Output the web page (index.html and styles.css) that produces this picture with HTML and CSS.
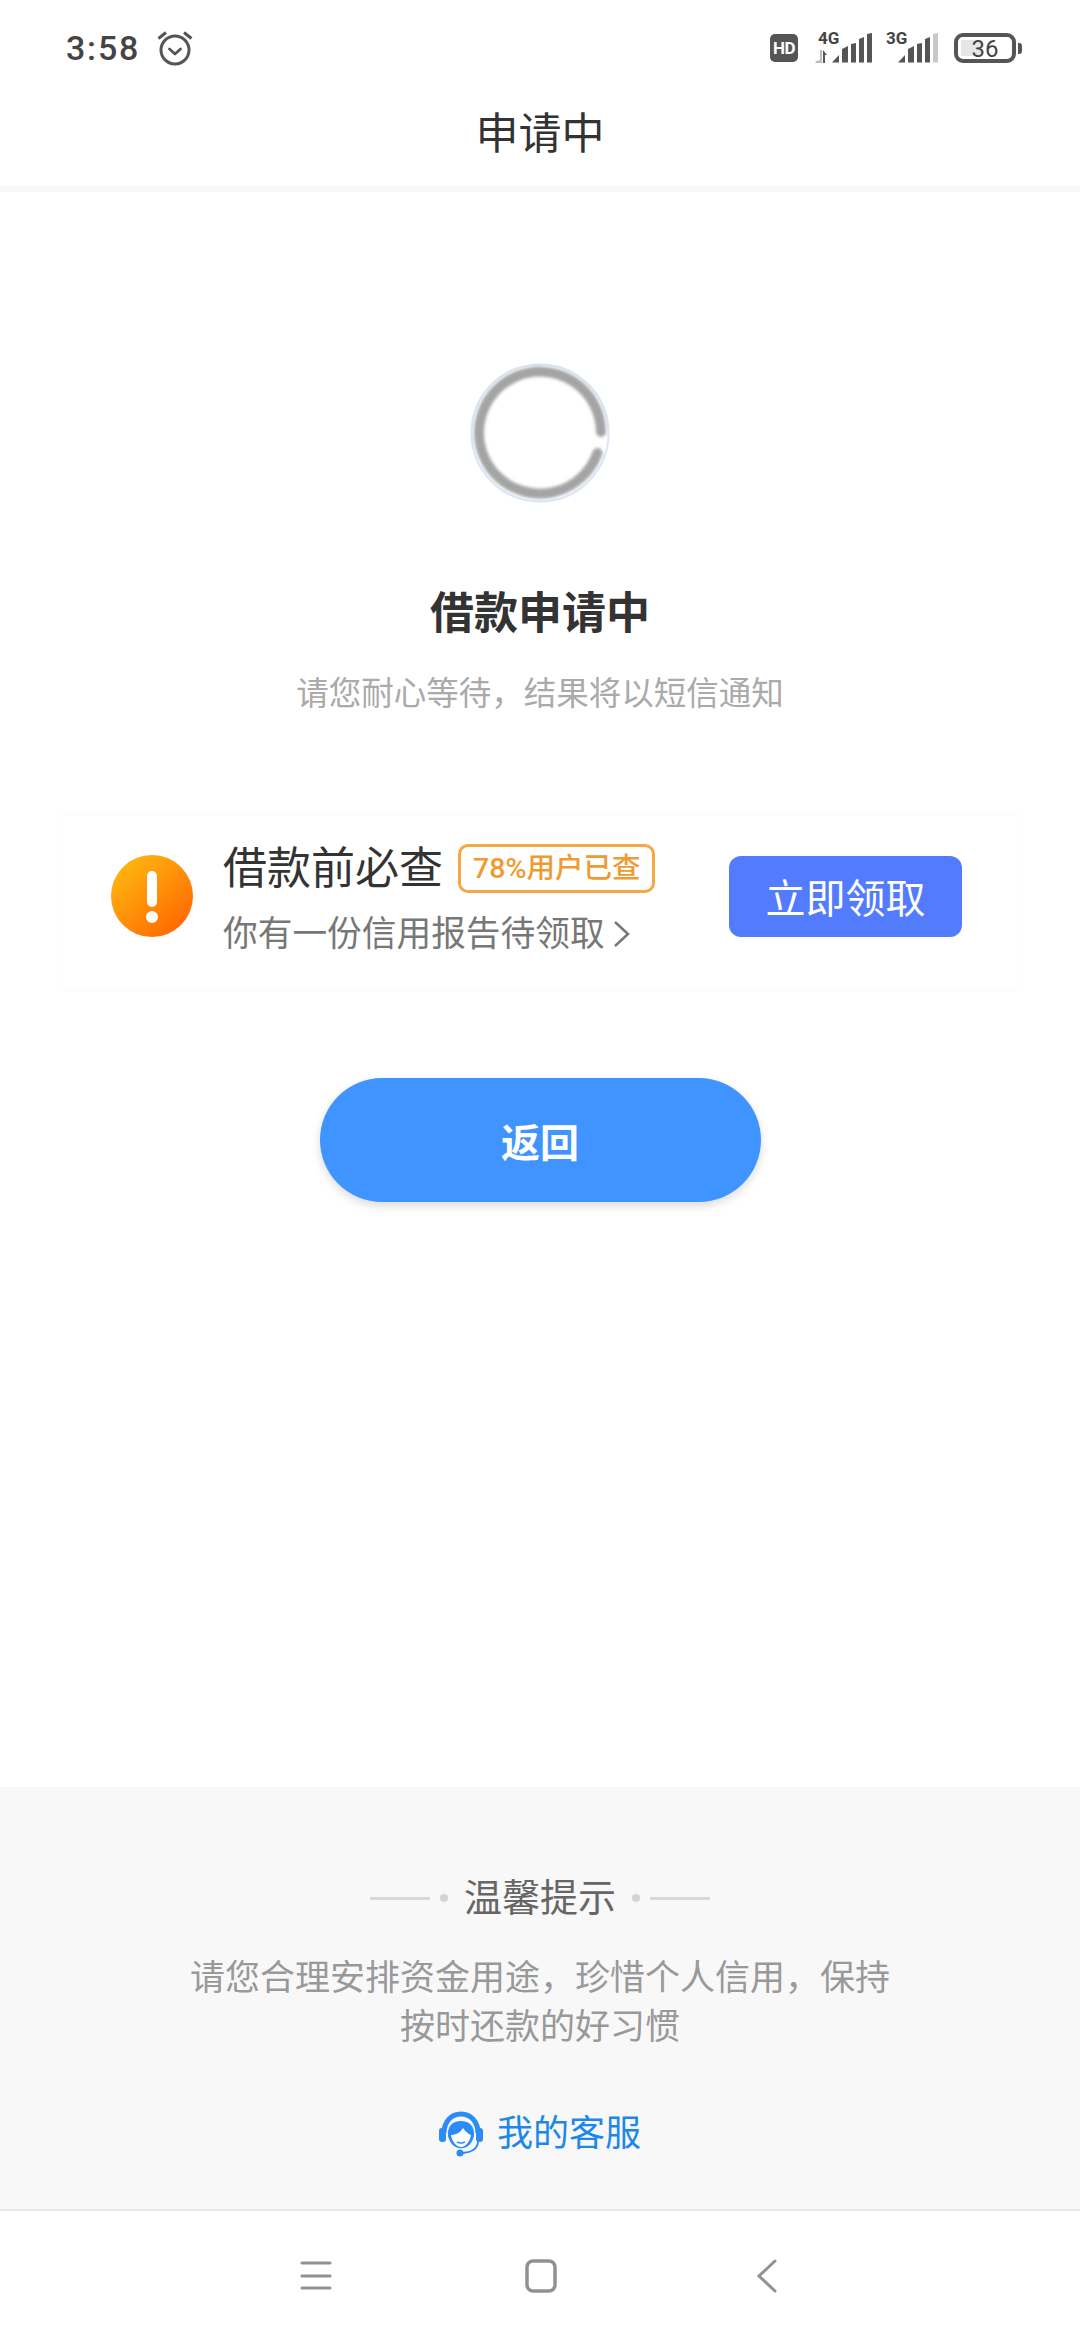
FILE: index.html
```html
<!DOCTYPE html>
<html lang="zh-CN">

<head>
    <meta charset="UTF-8">
    <meta name="viewport" content="width=device-width, initial-scale=1.0">
    <title>申请中</title>
    <link rel="stylesheet" href="styles.css">
</head>

<body>
    <div class="page">
        <header class="topbar">
            <div class="status">
                <div class="status-left">
                    <span class="time">3:58</span>
                    <svg class="alarm" width="36" height="36" viewBox="0 0 36 36" fill="none" stroke="#555" stroke-width="3">
                        <circle cx="18" cy="20" r="14" />
                        <path d="M12.5 19l5.5 5 5.5-5" stroke-width="2.8" stroke-linecap="round" stroke-linejoin="round" />
                        <path d="M1.5 8.500L9 2.500M34.500 8.500L27 2.500" />
                    </svg>
                </div>
                <div class="status-right">
                    <span class="hd">HD</span>
                    <div class="signal signal-4g">
                        <span class="net">4G</span>
                        <svg class="arrows" width="13" height="13" viewBox="0 0 13 13">
                            <path d="M5 0h2v13L0 13l2-2.500h3z" fill="#bbb" />
                            <path d="M8 13V0l4 5h-2v8z" fill="#555" />
                        </svg>
                        <svg class="bars" width="40" height="30" viewBox="0 0 40 30" fill="#555">
                            <path d="M0 29.500L7 22v7.500zM10 16l6-3v16.500h-6zM19 11l5-1v19.500h-5zM27 6l5-2v25.500h-5zM35 1l5-1v29.500h-5z" />
                        </svg>
                    </div>
                    <div class="signal signal-3g">
                        <span class="net">3G</span>
                        <svg class="bars" width="40" height="30" viewBox="0 0 40 30" fill="#555">
                            <path d="M0 29.500L7 22v7.500zM10 16l6-3v16.500h-6zM19 11l5-1v19.500h-5zM27 6l5-2v25.500h-5z" />
                            <path d="M35 1l5-1v29.500h-5z" fill="#c8c8c8" />
                        </svg>
                    </div>
                    <div class="battery">
                        <div class="battery-body">
                            <span class="battery-fill"></span>
                            <span class="battery-num">36</span>
                        </div>
                        <span class="battery-nub"></span>
                    </div>
                </div>
            </div>
            <h1 class="nav-title">申请中</h1>
        </header>

        <main class="content">
            <svg class="spinner" width="140" height="140" viewBox="0 0 140 140" fill="none">
                <defs>
                    <filter id="soft" x="-10%" y="-10%" width="120%" height="120%">
                        <feGaussianBlur stdDeviation="1.6" />
                    </filter>
                </defs>
                <circle cx="70" cy="70" r="68.500" stroke="#d9e7f9" stroke-width="2" />
                <path d="M127.500 90A61 61 0 1 1 131 69" stroke="#a4a4a4" stroke-width="10" stroke-linecap="round" filter="url(#soft)" />
            </svg>
            <h2 class="state-title">借款申请中</h2>
            <p class="state-sub">请您耐心等待，结果将以短信通知</p>

            <section class="promo">
                <svg class="promo-icon" width="82" height="82" viewBox="0 0 82 82">
                    <defs>
                        <linearGradient id="warn" x1="0.150" y1="0.100" x2="0.850" y2="0.900">
                            <stop offset="0" stop-color="#ffb510" />
                            <stop offset="1" stop-color="#ff6a00" />
                        </linearGradient>
                    </defs>
                    <circle cx="41" cy="41" r="41" fill="url(#warn)" />
                    <rect x="36" y="16" width="10" height="36" rx="5" fill="#fff" />
                    <circle cx="41" cy="62" r="6" fill="#fff" />
                </svg>
                <div class="promo-text">
                    <div class="promo-head">
                        <span class="promo-title">借款前必查</span>
                        <span class="promo-tag">78%用户已查</span>
                    </div>
                    <div class="promo-sub">
                        你有一份信用报告待领取
                        <svg width="18" height="28" viewBox="0 0 18 28" fill="none" stroke="#777" stroke-width="2.500">
                            <path d="M2 2l13 12L2 26" />
                        </svg>
                    </div>
                </div>
                <button class="promo-btn">立即领取</button>
            </section>

            <button class="back-btn">返回</button>
        </main>

        <footer class="tips">
            <div class="tips-head">
                <span class="tips-line"></span>
                <span class="tips-dot"></span>
                <span class="tips-title">温馨提示</span>
                <span class="tips-dot"></span>
                <span class="tips-line"></span>
            </div>
            <p class="tips-body">请您合理安排资金用途，珍惜个人信用，保持<br>按时还款的好习惯</p>
            <div class="service">
                <svg width="44" height="46" viewBox="0 0 44 46" fill="none">
                    <path d="M5 22C5 11 12 3 22 3s17 8 17 19" stroke="#2b8cf7" stroke-width="5" />
                    <rect x="0" y="17" width="7" height="14" rx="3" fill="#2b8cf7" />
                    <rect x="37" y="17" width="7" height="14" rx="3" fill="#2b8cf7" />
                    <path d="M9 25C8 15 14 10 22 10s14 5 13 15c-1 4-3 8-6 10-4 3-10 3-14 0-3-2-5-6-6-10z" fill="#2b8cf7" />
                    <path d="M12 24c4 0 9-2 12-7 2 3 5 6 8 7-1 6-5 12-10 12s-9-6-10-12z" fill="#fff" />
                    <path d="M18 31c3 1.500 5 1.500 8 0" stroke="#2b8cf7" stroke-width="1.500" />
                    <path d="M39 30c0 7-5 11-15 12" stroke="#2b8cf7" stroke-width="1.800" />
                    <circle cx="21" cy="42" r="3.500" fill="#2b8cf7" />
                </svg>
                <span class="service-text">我的客服</span>
            </div>
        </footer>

        <nav class="navbar">
            <svg width="40" height="40" viewBox="0 0 40 40" stroke="#919191" stroke-width="3" stroke-linecap="round">
                <path d="M6 7h28M6 20h28M6 32h28" />
            </svg>
            <svg width="40" height="40" viewBox="0 0 40 40" fill="none" stroke="#919191" stroke-width="3.500">
                <rect x="5" y="5" width="28" height="30" rx="6" />
            </svg>
            <svg width="40" height="40" viewBox="0 0 40 40" fill="none" stroke="#919191" stroke-width="3" stroke-linecap="round">
                <path d="M27 5L11 20l16 15" />
            </svg>
        </nav>
    </div>
</body>

</html>
```

FILE: styles.css
```css
* {
    box-sizing: border-box;
}

body {
    margin: 0;
    background-color: #fff;
    font-family: Roboto, "Noto Sans CJK SC", sans-serif;
}

.page {
    width: 1080px;
    height: 2340px;
    display: flex;
    flex-direction: column;
    overflow: hidden;
}

/* status bar + title */
.topbar {
    height: 192px;
    border-bottom: 6px solid #f8f8f8;
}

.status {
    height: 80px;
    padding: 16px 58px 0 66px;
    display: flex;
    align-items: center;
    justify-content: space-between;
}

.status-left {
    display: flex;
    align-items: center;
    gap: 17px;
}

.time {
    font-size: 34px;
    font-weight: 500;
    letter-spacing: 1.8px;
    color: #444;
}

.status-right {
    display: flex;
    align-items: center;
}

.hd {
    width: 28px;
    height: 28px;
    border-radius: 5px;
    background-color: #555;
    color: #fff;
    font-size: 17px;
    font-weight: 700;
    line-height: 28px;
    text-align: center;
    letter-spacing: -0.5px;
}

.signal {
    position: relative;
    height: 30px;
    display: flex;
    align-items: flex-end;
}

.signal-4g {
    width: 57px;
    margin-left: 17px;
    justify-content: flex-end;
}

.signal-3g {
    width: 54px;
    margin-left: 12px;
    justify-content: flex-end;
}

.net {
    position: absolute;
    top: -4px;
    font-size: 17px;
    font-weight: 700;
    line-height: 18px;
    color: #444;
}

.signal-4g .net {
    left: 3px;
}

.signal-3g .net {
    left: 2px;
}

.arrows {
    position: absolute;
    left: 0;
    bottom: 0;
}

.battery {
    margin-left: 16px;
    display: flex;
    align-items: center;
    gap: 2px;
}

.battery-body {
    position: relative;
    width: 62px;
    height: 30px;
    border: 4px solid #555;
    border-radius: 9px;
    display: flex;
    align-items: center;
    justify-content: center;
}

.battery-fill {
    position: absolute;
    left: 3px;
    top: 3px;
    bottom: 3px;
    width: 20px;
    background-color: #e6e6e6;
}

.battery-num {
    position: relative;
    top: 1px;
    font-size: 24px;
    line-height: 22px;
    color: #444;
}

.battery-nub {
    width: 4px;
    height: 11px;
    border-radius: 0 3px 3px 0;
    background-color: #555;
}

.nav-title {
    margin: 0;
    height: 102px;
    padding-top: 3px;
    font-size: 43px;
    font-weight: 400;
    line-height: 102px;
    text-align: center;
    color: #333;
}

/* main area */
.content {
    padding-top: 171px;
    display: flex;
    flex-direction: column;
    align-items: center;
}

.spinner {
    display: block;
}

.state-title {
    margin: 81px 0 0;
    font-size: 44px;
    font-weight: 700;
    line-height: 60px;
    color: #333;
}

.state-sub {
    margin: 28px 0 0;
    font-size: 32.5px;
    line-height: 44px;
    color: #aaa;
}

.promo {
    width: 964px;
    height: 178px;
    margin: 98px 0 0;
    padding: 0 59px 8px 52px;
    border: 1px solid #fbfbfb;
    border-radius: 4px;
    display: flex;
    align-items: center;
}

.promo-icon {
    flex: none;
    margin-bottom: 6px;
}

.promo-text {
    flex: 1;
    margin-left: 30px;
}

.promo-head {
    display: flex;
    align-items: center;
    gap: 15px;
}

.promo-title {
    font-size: 44px;
    line-height: 58px;
    color: #333;
}

.promo-tag {
    height: 49px;
    padding: 0 12px;
    border: 3px solid #f5a841;
    border-radius: 10px;
    font-size: 28.5px;
    font-weight: 500;
    line-height: 43px;
    color: #f09a32;
}

.promo-sub {
    margin-top: 11px;
    display: flex;
    align-items: center;
    gap: 8px;
    font-size: 34.7px;
    line-height: 50px;
    color: #777;
}

.promo-btn {
    flex: none;
    width: 233px;
    height: 81px;
    margin-bottom: 6px;
    padding: 0;
    border: none;
    border-radius: 12px;
    background-color: #537bfe;
    color: #fff;
    font-family: inherit;
    font-size: 40px;
}

.back-btn {
    width: 441px;
    height: 124px;
    margin-top: 86px;
    padding: 0;
    border: none;
    border-radius: 62px;
    background-color: #3f94ff;
    box-shadow: 0 4px 10px rgba(0, 0, 0, 0.14);
    color: #fff;
    font-family: inherit;
    font-size: 39px;
    font-weight: 700;
}

/* warm tips block */
.tips {
    margin-top: auto;
    height: 424px;
    padding-top: 83px;
    border-bottom: 2px solid #e8e8e8;
    background-color: #f8f8f8;
    display: flex;
    flex-direction: column;
    align-items: center;
}

.tips-head {
    height: 56px;
    display: flex;
    align-items: center;
}

.tips-line {
    width: 60px;
    height: 3px;
    background-color: #d8d8d8;
}

.tips-dot {
    width: 8px;
    height: 8px;
    margin: 0 10px;
    border-radius: 50%;
    background-color: #d4d4d4;
}

.tips-title {
    margin: 0 6px;
    font-size: 38px;
    line-height: 56px;
    color: #666;
}

.tips-body {
    margin: 28px 0 0;
    font-size: 35px;
    line-height: 49px;
    text-align: center;
    color: #999;
}

.service {
    margin-top: 58px;
    display: flex;
    align-items: center;
    gap: 14px;
}

.service-text {
    font-size: 36px;
    line-height: 48px;
    color: #1e88e8;
}

/* system nav */
.navbar {
    height: 129px;
    padding-left: 296px;
    display: flex;
    align-items: center;
    gap: 186px;
}
```
